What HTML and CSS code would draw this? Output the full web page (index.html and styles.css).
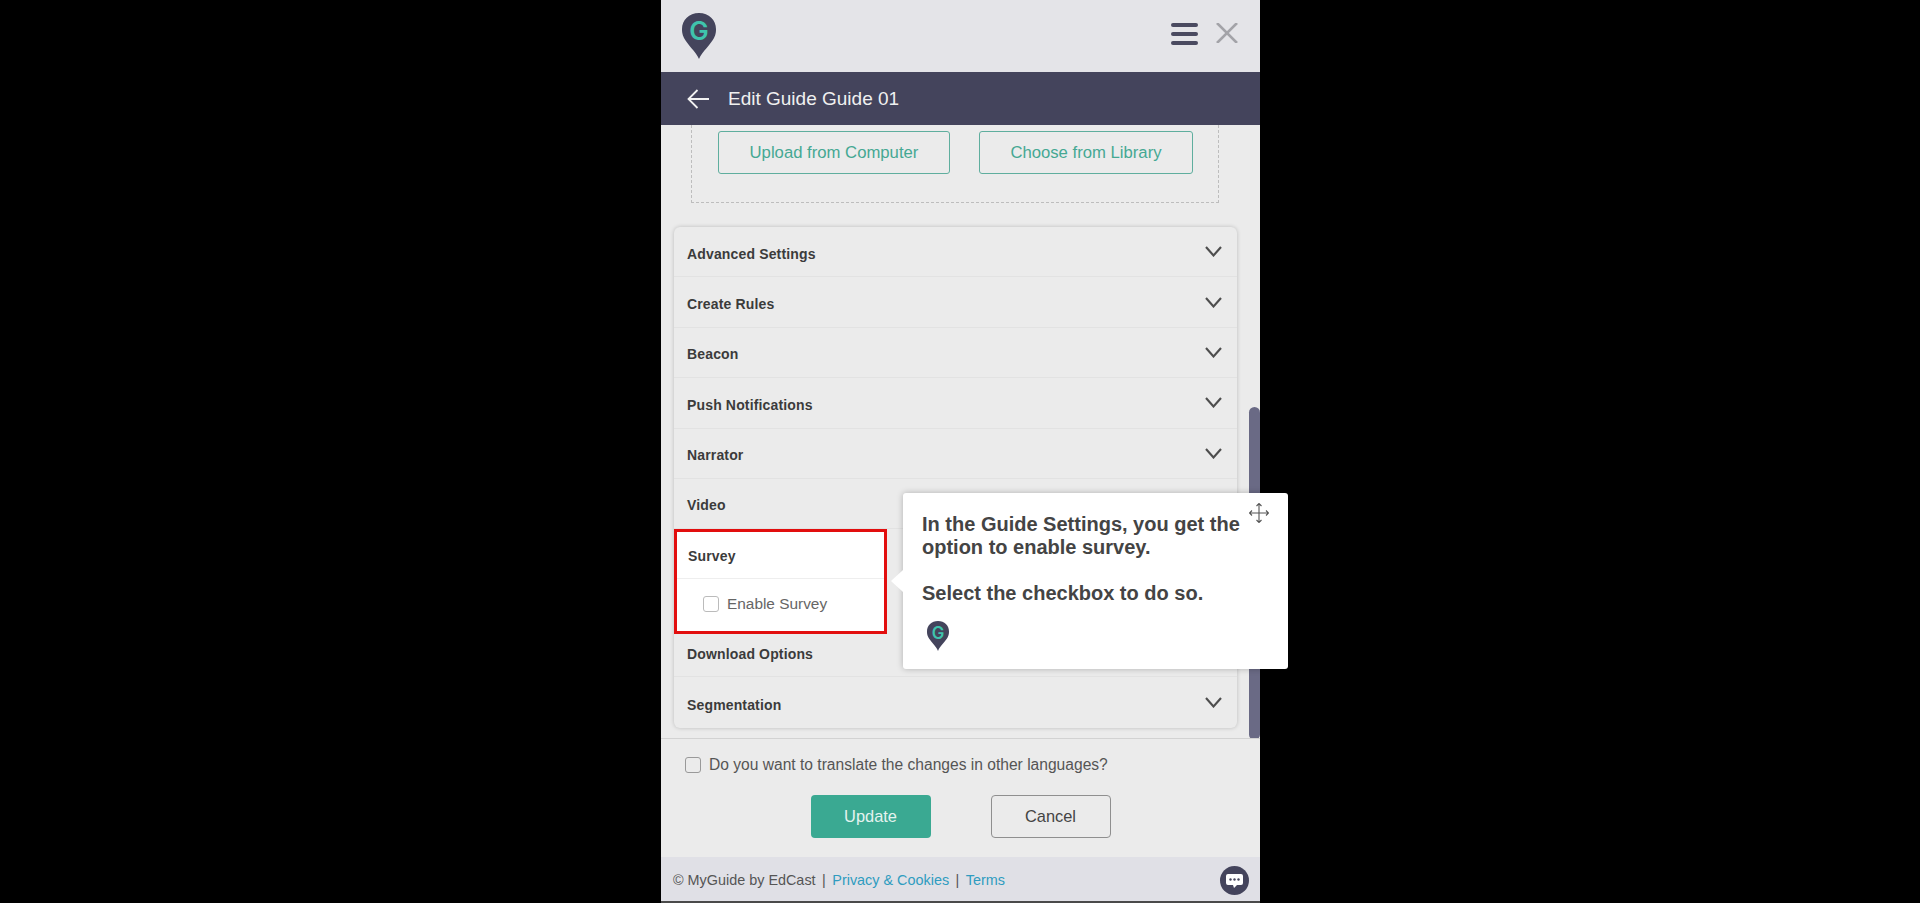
FILE: index.html
```html
<!DOCTYPE html>
<html lang="en">
<head>
  <meta charset="UTF-8" />
  <title>Edit Guide</title>
  <link rel="stylesheet" href="styles.css">
</head>
<body>
  <svg class="defs" width="0" height="0">
    <symbol id="chev" viewBox="0 0 17 11">
      <path d="M1 1 L8.5 9.5 L16 1" fill="none" stroke="#4d4d4d" stroke-width="2.1"/>
    </symbol>
  </svg>

  <div class="panel">
    <header class="top">
      <svg class="logo" viewBox="0 0 34 46">
        <path d="M17 46 C14 39 5 31 2 25 C0 21 0 18 0 16 C0 7 7 0 17 0 C27 0 34 7 34 16 C34 18 34 21 32 25 C29 31 20 39 17 46 Z" fill="#44445c"/>
        <text x="17" y="27" text-anchor="middle" class="pin-g">G</text>
      </svg>
      <div class="top-icons">
        <div class="burger"><span></span><span></span><span></span></div>
        <svg class="close" viewBox="0 0 22 20"><path d="M1 0 L21 20 M21 0 L1 20" stroke="#a3a3a8" stroke-width="2.6" fill="none"/></svg>
      </div>
    </header>

    <div class="titlebar">
      <svg class="back" viewBox="0 0 22 20"><path d="M22 10 H1.5 M10.5 1 L1.5 10 L10.5 19" stroke="#f2f2f2" stroke-width="1.8" fill="none"/></svg>
      <span>Edit Guide Guide 01</span>
    </div>

    <div class="content">
      <div class="dropzone">
        <button class="btn-outline btn-upload">Upload from Computer</button>
        <button class="btn-outline btn-library">Choose from Library</button>
      </div>

      <div class="accordion">
        <div class="acc-row"><span>Advanced Settings</span><svg class="chev"><use href="#chev"/></svg></div>
        <div class="acc-row"><span>Create Rules</span><svg class="chev"><use href="#chev"/></svg></div>
        <div class="acc-row"><span>Beacon</span><svg class="chev"><use href="#chev"/></svg></div>
        <div class="acc-row"><span>Push Notifications</span><svg class="chev"><use href="#chev"/></svg></div>
        <div class="acc-row"><span>Narrator</span><svg class="chev"><use href="#chev"/></svg></div>
        <div class="acc-row acc-video"><span>Video</span></div>
        <div class="acc-survey">
          <div class="spot">
            <div class="spot-title">Survey</div>
            <label class="spot-check"><i class="check"></i>Enable Survey</label>
          </div>
        </div>
        <div class="acc-row acc-short"><span>Download Options</span></div>
        <div class="acc-row acc-last"><span>Segmentation</span><svg class="chev"><use href="#chev"/></svg></div>
      </div>

      <div class="scrollbar"></div>
    </div>

    <label class="translate"><i class="check"></i>Do you want to translate the changes in other languages?</label>

    <div class="actions">
      <button class="btn-update">Update</button>
      <button class="btn-cancel">Cancel</button>
    </div>

    <footer class="foot">
      <span>© MyGuide by EdCast</span><span class="sep">|</span>
      <a>Privacy &amp; Cookies</a><span class="sep">|</span>
      <a>Terms</a>
      <svg class="chat" viewBox="0 0 29 29">
        <circle cx="14.5" cy="14.5" r="14.5" fill="#44445c"/>
        <path d="M8 8 H21 Q23 8 23 10 V17 Q23 19 21 19 H17 L14 22 L13 19 H8 Q6 19 6 17 V10 Q6 8 8 8 Z" fill="#fff"/>
        <circle cx="10.5" cy="13.5" r="1.2" fill="#44445c"/>
        <circle cx="14.5" cy="13.5" r="1.2" fill="#44445c"/>
        <circle cx="18.5" cy="13.5" r="1.2" fill="#44445c"/>
      </svg>
    </footer>
  </div>

  <!-- step tooltip sits over the panel -->
  <div class="tip">
    <svg class="move" viewBox="0 0 20 20"><path d="M10 0.5 V19.5 M0.5 10 H19.5 M7.5 3 L10 0.5 L12.5 3 M7.5 17 L10 19.5 L12.5 17 M3 7.5 L0.5 10 L3 12.5 M17 7.5 L19.5 10 L17 12.5" stroke="#555" stroke-width="1.1" fill="none"/></svg>
    <p>In the Guide Settings, you get the<br>option to enable survey.</p>
    <p>Select the checkbox to do so.</p>
    <svg class="tip-logo" viewBox="0 0 34 46">
      <path d="M17 46 C14 39 5 31 2 25 C0 21 0 18 0 16 C0 7 7 0 17 0 C27 0 34 7 34 16 C34 18 34 21 32 25 C29 31 20 39 17 46 Z" fill="#44445c"/>
      <text x="17" y="27" text-anchor="middle" class="pin-g">G</text>
    </svg>
  </div>
</body>
</html>
```

FILE: styles.css
```css
* {
  box-sizing: border-box;
}

body {
  margin: 0;
  height: 903px;
  overflow: hidden;
  background: #000;
  font-family: "Liberation Sans", Arial, sans-serif;
  color: #333;
  padding-left: 661px;
}

.defs {
  position: absolute;
}

.pin-g {
  font-family: Inter, "Liberation Sans", sans-serif;
  font-size: 26px;
  font-weight: 600;
  fill: #3fc4ad;
}

.panel {
  width: 599px;
  height: 903px;
  background: #ebebeb;
  border-bottom: 2px solid #4a4a4a;
  display: flex;
  flex-direction: column;
}

/* top strip */
.top {
  height: 72px;
  flex: none;
  background: #e4e4e8;
  display: flex;
  justify-content: space-between;
  padding: 13px 22px 0 21px;
}

.logo {
  width: 34px;
  height: 46px;
}

.top-icons {
  display: flex;
  gap: 18px;
  padding-top: 10px;
}

.burger {
  width: 27px;
  height: 22px;
  display: flex;
  flex-direction: column;
  justify-content: space-between;
}

.burger span {
  height: 4px;
  background: #4a4a60;
  border-radius: 2px;
}

.close {
  width: 22px;
  height: 20px;
}

.titlebar {
  height: 53px;
  flex: none;
  background: #44445c;
  color: #f0f0f0;
  font-size: 19px;
  display: flex;
  align-items: center;
  padding-left: 26px;
  gap: 19px;
}

.back {
  width: 22px;
  height: 20px;
}

/* scrolling part */
.content {
  height: 614px;
  flex: none;
  position: relative;
  overflow: hidden;
  padding: 0 23px 0 13px;
  border-bottom: 1px solid #d2d2d2;
}

.dropzone {
  margin: -20px 18px 24px 17px;
  height: 98px;
  padding: 25px 25px 0 26px;
  border: 1px dashed #bdbdbd;
  display: flex;
  gap: 29px;
}

.btn-outline {
  height: 43px;
  background: #ebebeb;
  border: 1px solid #5fae9e;
  border-radius: 3px;
  color: #45a893;
  font: 16.7px "Liberation Sans", Arial, sans-serif;
}

.btn-upload {
  width: 233px;
}

.btn-library {
  width: 215px;
}

.accordion {
  border-radius: 6px;
  box-shadow: 0 0 4px rgba(0, 0, 0, 0.2);
  background: #ebebeb;
}

.acc-row {
  height: 50.4px;
  display: flex;
  align-items: center;
  justify-content: space-between;
  padding: 4px 15px 0 13px;
  border-bottom: 1px solid #e2e2e2;
  font-size: 14px;
  font-weight: bold;
  letter-spacing: 0.15px;
  color: #3b3b3b;
}

.acc-video {
  padding-top: 3px;
}

.acc-short {
  height: 43px;
  padding: 0 15px 2px 13px;
}

.acc-last {
  border-bottom: 0;
}

.chev {
  width: 17px;
  height: 11px;
  margin-top: -4px;
}

.acc-survey {
  height: 105px;
}

.spot {
  width: 213px;
  height: 105px;
  background: #fff;
  border: 3px solid #e20e0e;
}

.spot-title {
  height: 47px;
  padding: 16px 0 0 11px;
  border-bottom: 1px solid #eee;
  font-size: 14px;
  font-weight: bold;
  letter-spacing: 0.15px;
  color: #3b3b3b;
}

.spot-check {
  display: flex;
  align-items: center;
  gap: 8px;
  padding: 16px 0 0 26px;
  font-size: 15.4px;
  color: #666;
}

.check {
  width: 16px;
  height: 16px;
  flex: none;
  background: #fff;
  border: 1px solid #bbb;
  border-radius: 3px;
}

.scrollbar {
  position: absolute;
  right: 0;
  top: 282px;
  width: 11px;
  height: 333px;
  background: #6a6a85;
  border-radius: 6px;
}

/* bottom part */
.translate {
  display: flex;
  align-items: center;
  gap: 8px;
  padding: 17px 0 0 24px;
  font-size: 15.6px;
  color: #555;
}

.translate .check {
  background: #ebebeb;
  border-color: #999;
}

.actions {
  display: flex;
  justify-content: center;
  gap: 60px;
  padding: 21px 0 0 0;
}

.btn-update,
.btn-cancel {
  width: 120px;
  height: 43px;
  border-radius: 4px;
  font: 16.4px "Liberation Sans", Arial, sans-serif;
}

.btn-update {
  background: #3aa992;
  border: 0;
  color: #e4f3ef;
}

.btn-cancel {
  background: #ebebeb;
  border: 1px solid #8f8f8f;
  color: #444;
}

.foot {
  margin-top: auto;
  height: 44px;
  background: #e0e0e6;
  display: flex;
  align-items: center;
  padding: 2px 11px 0 12px;
  font-size: 14.4px;
  color: #555;
}

.foot a {
  color: #2f9cc0;
}

.sep {
  margin: 0 6.5px;
}

.chat {
  width: 29px;
  height: 29px;
  margin-left: auto;
}

/* tooltip */
.tip {
  position: absolute;
  left: 903px;
  top: 493px;
  width: 385px;
  height: 176px;
  background: #fff;
  border-radius: 3px;
  box-shadow: 0 0 6px rgba(0, 0, 0, 0.25);
  padding: 20px 19px 0 19px;
  font-size: 20px;
  font-weight: bold;
  line-height: 23px;
  color: #444;
}

.tip::before {
  content: "";
  position: absolute;
  left: -12px;
  top: 77px;
  width: 0;
  height: 0;
  border: 11px solid transparent;
  border-left: 0;
  border-right: 12px solid #fff;
}

.tip p {
  margin: 0 0 23px;
}

.move {
  position: absolute;
  left: 346px;
  top: 10px;
  width: 20px;
  height: 20px;
}

.tip-logo {
  position: absolute;
  left: 24px;
  top: 128px;
  width: 22px;
  height: 30px;
}
```
